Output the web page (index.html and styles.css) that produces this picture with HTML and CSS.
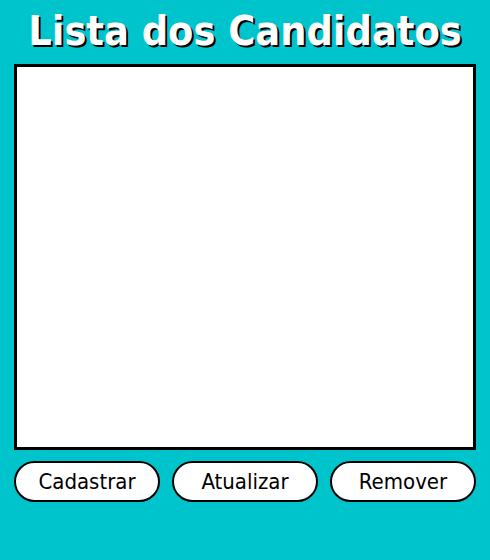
FILE: index.html
```
<!DOCTYPE html>
<html>
<head>
<meta charset="utf-8">
<link rel="stylesheet" href="styles.css">
</head>
<body>
<div class="page">
  <h1 class="title">Lista dos Candidatos</h1>
  <div class="list"></div>
  <div class="actions">
    <button class="btn">Cadastrar</button>
    <button class="btn">Atualizar</button>
    <button class="btn">Remover</button>
  </div>
</div>
</body>
</html>
```
FILE: styles.css
```
html, body {
  margin: 0;
  padding: 0;
  background: #00c4cc;
  height: 100%;
}
.page {
  padding: 0 14px;
  display: flex;
  flex-direction: column;
}
.title {
  margin: 0;
  height: 64px;
  line-height: 62px;
  text-align: center;
  color: #fff;
  font-family: "DejaVu Sans Condensed", "DejaVu Sans", sans-serif;
  font-weight: bold;
  font-size: 41px;
  text-shadow: 2px 2px 0 #000;
}
.list {
  background: #fff;
  border: 3px solid #000;
  height: 380px;
}
.actions {
  margin-top: 11px;
  display: grid;
  grid-template-columns: repeat(3, 1fr);
  gap: 12px;
}
.btn {
  height: 41px;
  background: #fff;
  border: 2px solid #000;
  border-radius: 21px;
  font-family: "DejaVu Sans Condensed", "DejaVu Sans", sans-serif;
  font-size: 22px;
  color: #000;
  padding: 0;
}
```
